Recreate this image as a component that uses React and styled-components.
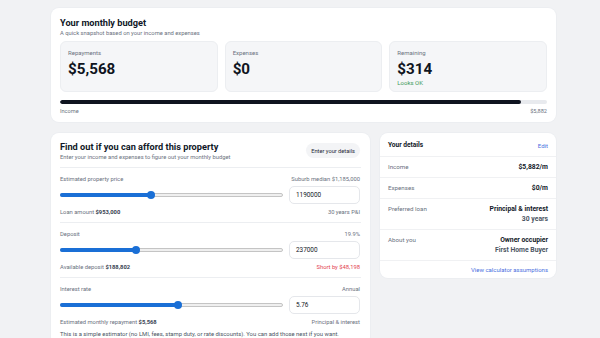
import styled, { createGlobalStyle } from 'styled-components'

const GlobalStyle = createGlobalStyle`
  html, body {
    margin: 0;
    padding: 0;
    background: #f1f2f4;
    font-family: Roboto, "Noto Sans", sans-serif;
    color: #111827;
  }
  * { box-sizing: border-box; }
`

const sections = [
  {
    label: 'Estimated property price',
    hint: 'Suburb median $1,185,000',
    fill: 41,
    value: '1190000',
    noteLabel: 'Loan amount',
    noteValue: '$953,000',
    side: '30 years P&I',
  },
  {
    label: 'Deposit',
    hint: '19.9%',
    fill: 34,
    value: '237000',
    noteLabel: 'Available deposit',
    noteValue: '$188,802',
    side: 'Short by $48,198',
    warn: true,
  },
  {
    label: 'Interest rate',
    hint: 'Annual',
    fill: 53,
    value: '5.76',
    noteLabel: 'Estimated monthly repayment',
    noteValue: '$5,568',
    side: 'Principal & interest',
    last: true,
  },
]

const details = [
  { label: 'Income', value: '$5,882/m' },
  { label: 'Expenses', value: '$0/m' },
  { label: 'Preferred loan', value: 'Principal & interest', sub: '30 years' },
  { label: 'About you', value: 'Owner occupier', sub: 'First Home Buyer' },
]

const App = () => {
  return (
    <>
      <GlobalStyle />
      <Page>
        <Card>
          <Title>Your monthly budget</Title>
          <Subtitle>A quick snapshot based on your income and expenses</Subtitle>
          <Stats>
            <Stat>
              <StatLabel>Repayments</StatLabel>
              <StatValue>$5,568</StatValue>
            </Stat>
            <Stat>
              <StatLabel>Expenses</StatLabel>
              <StatValue>$0</StatValue>
            </Stat>
            <Stat>
              <StatLabel>Remaining</StatLabel>
              <StatValue>$314</StatValue>
              <StatNote>Looks OK</StatNote>
            </Stat>
          </Stats>
          <Bar>
            <BarFill style={{ width: '94.7%' }} />
          </Bar>
          <BarLegend>
            <span>Income</span>
            <span>$5,882</span>
          </BarLegend>
        </Card>

        <Columns>
          <FormCard>
            <FormHead>
              <div>
                <Title>Find out if you can afford this property</Title>
                <Subtitle>Enter your income and expenses to figure out your monthly budget</Subtitle>
              </div>
              <PillButton>Enter your details</PillButton>
            </FormHead>
            {sections.map((s) => (
              <Section key={s.label} $last={s.last}>
                <Line>
                  <span>{s.label}</span>
                  <span>{s.hint}</span>
                </Line>
                <Control>
                  <Slider>
                    <Track />
                    <TrackFill style={{ width: `${s.fill}%` }} />
                    <Thumb style={{ left: `${s.fill}%` }} />
                  </Slider>
                  <Field>{s.value}</Field>
                </Control>
                <Line>
                  <span>
                    {s.noteLabel} <b>{s.noteValue}</b>
                  </span>
                  <Side $warn={s.warn}>{s.side}</Side>
                </Line>
              </Section>
            ))}
            <Footnote>
              This is a simple estimator (no LMI, fees, stamp duty, or rate discounts). You can add those next if you want.
            </Footnote>
          </FormCard>

          <DetailsCard>
            <DetailsHead>
              <span>Your details</span>
              <LinkText>Edit</LinkText>
            </DetailsHead>
            {details.map((d) => (
              <DetailRow key={d.label}>
                <DetailLabel>{d.label}</DetailLabel>
                <DetailValue>
                  <div>{d.value}</div>
                  {d.sub && <DetailSub>{d.sub}</DetailSub>}
                </DetailValue>
              </DetailRow>
            ))}
            <DetailsFoot>
              <LinkText>View calculator assumptions</LinkText>
            </DetailsFoot>
          </DetailsCard>
        </Columns>
      </Page>
    </>
  )
}

export default App

const Page = styled.div`
  width: 505px;
  margin-left: 51px;
  padding-top: 8px;
  display: flex;
  flex-direction: column;
  gap: 11px;
`
const Card = styled.div`
  background: #fff;
  border-radius: 8px;
  padding: 8px 9px 7px 9px;
  box-shadow: 0 0 0 1px #eceef1;
`
const FormCard = styled(Card)`
  padding-top: 7px;
`
const Title = styled.div`
  font-size: 9.2px;
  font-weight: 700;
  line-height: 13px;
  color: #111827;
`
const Subtitle = styled.div`
  font-size: 5.8px;
  line-height: 8px;
  color: #6b7280;
`
const Stats = styled.div`
  display: grid;
  grid-template-columns: repeat(3, 1fr);
  gap: 7px;
  margin-top: 4px;
`
const Stat = styled.div`
  background: #f5f6f8;
  border: 1px solid #eceef1;
  border-radius: 6px;
  height: 51px;
  padding: 6px 7px;
`
const StatLabel = styled.div`
  font-size: 6px;
  line-height: 9px;
  color: #6b7280;
`
const StatValue = styled.div`
  font-size: 15.2px;
  font-weight: 700;
  line-height: 20px;
  margin-top: 2px;
  color: #0f1420;
`
const StatNote = styled.div`
  font-size: 6px;
  line-height: 8px;
  color: #3f9a5a;
`
const Bar = styled.div`
  position: relative;
  height: 4px;
  margin-top: 8px;
  border-radius: 2px;
  background: #e8eaee;
  overflow: hidden;
`
const BarFill = styled.div`
  height: 100%;
  background: #0f1420;
  border-radius: 2px;
`
const BarLegend = styled.div`
  display: flex;
  justify-content: space-between;
  margin-top: 3px;
  font-size: 5.6px;
  line-height: 8px;
  color: #6b7280;
`
const Columns = styled.div`
  display: grid;
  grid-template-columns: 319px 176px;
  gap: 10px;
  align-items: start;
`
const FormHead = styled.div`
  display: flex;
  justify-content: space-between;
  align-items: center;
  padding: 0 1px 6px 0;
  border-bottom: 1px solid #eceef1;
`
const PillButton = styled.div`
  background: #f3f4f6;
  border-radius: 8px;
  height: 15px;
  padding: 0 5px;
  display: flex;
  align-items: center;
  font-size: 5.7px;
  color: #1f2937;
`
const Section = styled.div`
  padding: ${(p) => (p.$last ? '7px 1px 4px 0' : '7px 1px 6px 0')};
  border-bottom: ${(p) => (p.$last ? 'none' : '1px solid #eceef1')};
`
const Line = styled.div`
  display: flex;
  justify-content: space-between;
  font-size: 5.8px;
  line-height: 8px;
  color: #6b7280;
  b {
    font-weight: 700;
    color: #374151;
  }
`
const Side = styled.span`
  color: ${(p) => (p.$warn ? '#e3424f' : '#6b7280')};
`
const Control = styled.div`
  display: flex;
  align-items: center;
  gap: 6px;
  margin: 3px 0 4px;
`
const Slider = styled.div`
  position: relative;
  flex: 1;
  height: 18px;
`
const Track = styled.div`
  position: absolute;
  left: 0;
  right: 0;
  top: 7px;
  height: 4px;
  border-radius: 2px;
  background: #efefef;
  border: 1px solid #c4c4c4;
`
const TrackFill = styled.div`
  position: absolute;
  left: 0;
  top: 7px;
  height: 4px;
  border-radius: 2px;
  background: #1a6fd6;
`
const Thumb = styled.div`
  position: absolute;
  top: 5px;
  width: 8px;
  height: 8px;
  margin-left: -4px;
  border-radius: 50%;
  background: #1a6fd6;
`
const Field = styled.div`
  width: 71px;
  height: 18px;
  border: 1px solid #e5e7eb;
  border-radius: 5px;
  padding: 0 6px;
  display: flex;
  align-items: center;
  font-size: 6.4px;
  color: #111827;
`
const Footnote = styled.div`
  font-size: 5.9px;
  line-height: 8px;
  color: #4b5563;
`
const DetailsCard = styled.div`
  background: #fff;
  border-radius: 8px;
  box-shadow: 0 0 0 1px #eceef1;
  overflow: hidden;
`
const DetailsHead = styled.div`
  display: flex;
  justify-content: space-between;
  align-items: center;
  height: 23px;
  padding: 1px 8px 0;
  font-size: 6.6px;
  font-weight: 700;
  color: #111827;
`
const LinkText = styled.span`
  color: #4a6fe0;
  font-size: 6px;
  font-weight: 400;
`
const DetailRow = styled.div`
  display: flex;
  justify-content: space-between;
  align-items: flex-start;
  border-top: 1.5px solid #f0f1f3;
  padding: 5px 8px;
`
const DetailLabel = styled.div`
  font-size: 6.2px;
  line-height: 10px;
  color: #6b7280;
`
const DetailValue = styled.div`
  text-align: right;
  font-size: 6.8px;
  line-height: 10px;
  font-weight: 700;
  color: #111827;
`
const DetailSub = styled.div`
  color: #4b5563;
`
const DetailsFoot = styled.div`
  border-top: 1.5px solid #f0f1f3;
  height: 18px;
  padding: 0 8px;
  display: flex;
  align-items: center;
  justify-content: flex-end;
`
